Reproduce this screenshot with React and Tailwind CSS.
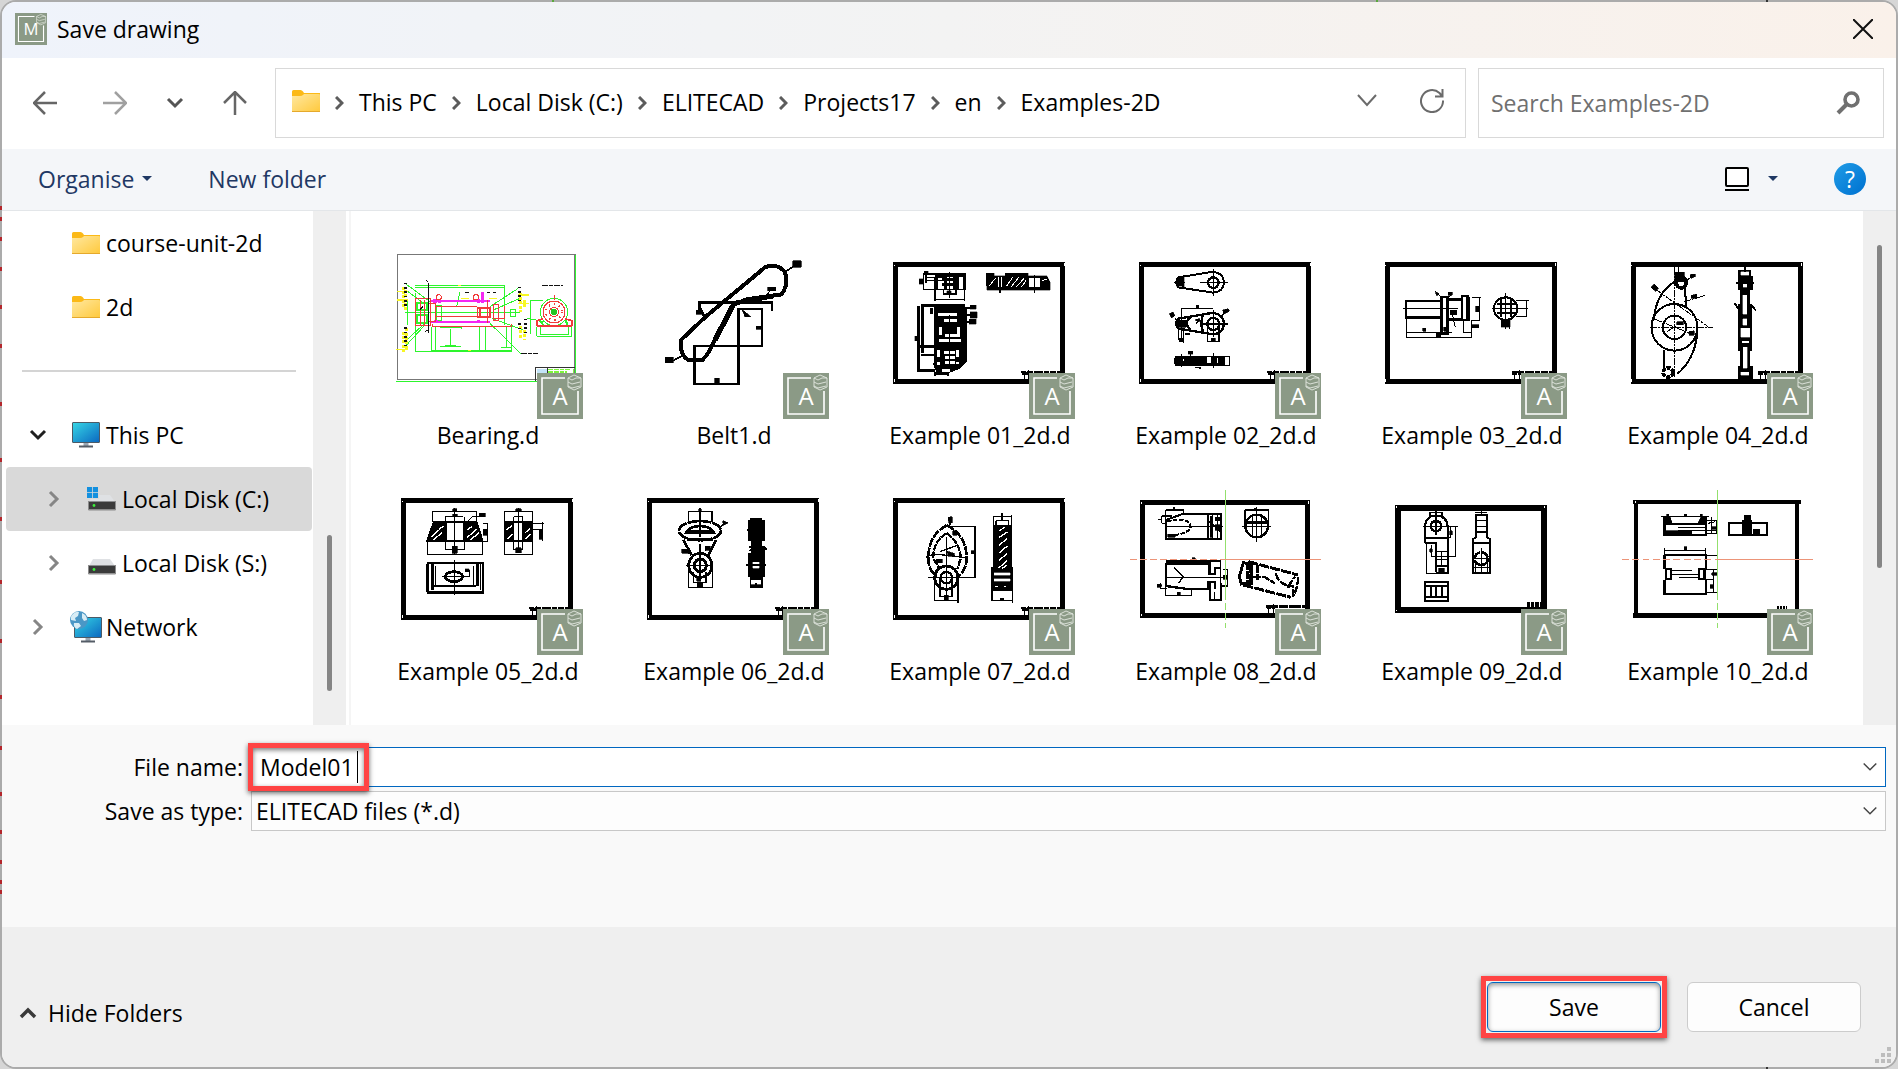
import { useState } from "react";

const crumbs = ["This PC", "Local Disk (C:)", "ELITECAD", "Projects17", "en", "Examples-2D"];

function Chevron({ dir = "right", className = "" }) {
  const paths = {
    right: "M6 3L13 10L6 17",
    down: "M3 6L10 13L17 6",
    up: "M3 14L10 7L17 14",
  };
  return (
    <svg viewBox="0 0 20 20" fill="none" stroke="currentColor" className={className} aria-hidden="true">
      <path d={paths[dir]} />
    </svg>
  );
}

// Green product badge, used in the title bar and on every file
function Badge({ letter, className }) {
  return (
    <svg viewBox="0 0 46 46" className={className} aria-hidden="true">
      <rect width="46" height="46" fill="#8b9a86" />
      <path d="M28 5H5V41H41V18" fill="none" stroke="#fff" strokeWidth="1.6" />
      <path
        d="M37 2L44 5V14L37 17L31 14V5ZM31 5L35 7L39 5L44 5M31 9L35 11L43 9M31 13L35 15L43 13"
        fill="none"
        stroke="#e3e8e1"
        strokeWidth="0.9"
      />
      <text x="23" y="32" textAnchor="middle" fontSize="24" fill="#fff">
        {letter}
      </text>
    </svg>
  );
}

function FolderIcon() {
  return (
    <svg viewBox="0 0 28 22" className="h-[22px] w-7 shrink-0" aria-hidden="true">
      <defs>
        <linearGradient id="folder" x1="0" y1="0" x2="1" y2="1">
          <stop offset="0" stopColor="#ffe8a0" />
          <stop offset="1" stopColor="#ffc93c" />
        </linearGradient>
      </defs>
      <path d="M0 1.5Q0 0 1.5 0H8.5Q10 0 11 1.5L12 3H28V8H0Z" fill="#fbb917" />
      <path d="M0 6H8Q10 6 11 5L12 4H27Q28 4 28 5V20.5Q28 22 27 22H1Q0 22 0 20.5Z" fill="url(#folder)" />
      <path d="M0 21.5H28" stroke="#e5a92c" />
    </svg>
  );
}

function Monitor() {
  return (
    <>
      <defs>
        <linearGradient id="screen" x1="0" y1="0" x2="1" y2="1">
          <stop offset="0" stopColor="#36d7e6" />
          <stop offset="1" stopColor="#0b67c0" />
        </linearGradient>
      </defs>
      <rect x="0.5" y="0.5" width="27" height="20" rx="0.5" fill="url(#screen)" stroke="#4c5a66" />
      <path d="M11.5 21H16.5V24H11.5Z" fill="#9aa6b2" />
      <path d="M7 23.5H21V25.5H7Z" fill="#545c66" />
    </>
  );
}

function PcIcon() {
  return (
    <svg viewBox="0 0 28 26" className="h-[26px] w-7 shrink-0" aria-hidden="true">
      <Monitor />
    </svg>
  );
}

function NetworkIcon() {
  return (
    <svg viewBox="0 0 32 32" className="-mr-0.5 -ml-0.5 h-8 w-8 shrink-0" aria-hidden="true">
      <g transform="translate(4 6)">
        <Monitor />
      </g>
      <circle cx="9" cy="9" r="9" fill="#4a97c6" />
      <path d="M2 4Q5 0 9 1L8 5L5 7L6 10L1 9Q0 6 2 4ZM4 12L9 12L11 15L7 18Q3 16 4 12ZM12 2Q17 4 17 9L14 10L12 7Z" fill="#d7ecf5" />
    </svg>
  );
}

function DriveIcon({ system }) {
  return (
    <svg viewBox="0 0 29 24" className="h-6 w-[29px] shrink-0" aria-hidden="true">
      <path d="M6 8H23L28 15H2Z" fill="#dfe1e4" />
      <rect x="2" y="14.5" width="26" height="8" fill="#3b3b3b" />
      <path d="M1.5 14V23H28.5V14" fill="none" stroke="#8c8c8c" />
      <circle cx="7" cy="18.5" r="1.4" fill="#3cf03c" />
      {system && (
        <>
          <rect width="12" height="12" fill="#d9d9d9" />
          <path d="M0 0H5.2V5.2H0ZM6 0H11V5.2H6ZM0 6H5.2V11H0ZM6 6H11V11H6Z" fill="#1390df" />
        </>
      )}
    </svg>
  );
}

// Black drawing border with the title block scribble at the bottom right
function Sheet({ x = 76, y = 74, w = 502, h = 349, t = 15 }) {
  return (
    <>
      <rect x={x} y={y} width={w} height={h} fill="none" stroke="#000" strokeWidth={t} />
      <path
        d={`M${x - 4} ${y}v5M${x + w + 4} ${y - 4}v8M${x - 4} ${y + h - 5}v8`}
        stroke="#fff"
        strokeWidth="3"
      />
      <path
        d={`M${x + w - 124} ${y + h - 27}h116M${x + w - 122} ${y + h - 22}h26`}
        stroke="#000"
        strokeWidth="8"
        strokeDasharray="14 2 20 3 26 4"
      />
      <path d={`M${x + w - 116} ${y + h - 30}v24M${x + w - 102} ${y + h - 34}v28`} stroke="#000" strokeWidth="3" />
    </>
  );
}

function Bearing() {
  return (
    <>
      <rect x="52" y="44" width="533" height="375" stroke="#777" strokeWidth="4" />
      <g stroke="#2df52d" strokeWidth="3">
        <path d="M49 424H587V44" />
        <path d="M105 160V334H395V262M105 136H373V255M105 142H373M81 176V256M154 262V331M166 262V331M299 262V331M315 262V331M154 331H395M76 216H420M450 181V283M450 181H490M470 288H575V262M470 288V262M482 258V283H564V258" />
        <path d="M180 262H243V267M180 320H243M210 267V320M228 316H195M362 322H395M378 262V320M390 207V230H405V207Z" />
        <path d="M75 130L150 185M78 150L130 190M80 300L140 245M75 320L135 255M330 250L422 341M415 145L330 200M420 175L340 210M430 270L335 235M440 235L495 245M310 185V165M240 155L230 200M170 195H185V240H170Z" />
        <circle cx="522" cy="216" r="41" />
        <path d="M112 190H140V210H112ZM112 226H140V250H112ZM478 240L490 255M556 240L566 262" strokeWidth="6" />
      </g>
      <g stroke="#f426f4" strokeWidth="7">
        <path d="M150 183H330M150 246H330" />
        <path d="M165 178V190M178 178V190M295 178V190M308 155V190M168 240V250M296 240V250" strokeWidth="10" />
      </g>
      <g stroke="#f23a3a" strokeWidth="3">
        <path d="M106 176H150V255H106ZM120 180V255M132 180V255M157 258H395M157 258V252M395 258V252M165 200H292M165 230H292M145 190H166V244H145ZM340 192H355V240H340ZM374 198V234H340M522 165V180" />
        <path d="M292 203H330V230H292ZM300 203V230M322 180V250M470 258V242L490 236M575 258V242L555 236M470 258H575" strokeWidth="5" />
        <circle cx="176" cy="172" r="8" />
        <circle cx="288" cy="172" r="8" />
        <circle cx="522" cy="216" r="33" />
        <circle cx="522" cy="216" r="24" strokeDasharray="4 12" strokeWidth="6" />
        <circle cx="522" cy="216" r="14" />
      </g>
      <circle cx="522" cy="216" r="10" fill="#24c424" stroke="none" />
      <g stroke="#f7f724" strokeWidth="9">
        <path d="M70 140V200M76 150V215M70 275V338M79 265V330M422 158V215M432 180V200M422 258V298M434 270V300" strokeDasharray="9 4" />
        <path d="M50 155H85M50 180H85M48 328H85M415 165H448M415 190H448M243 175H268M328 175H352M235 136H243M265 331H273" strokeWidth="4" />
      </g>
      <g stroke="#111" strokeWidth="3">
        <path d="M76 128V200M76 262V322M418 140V190M418 250V275M436 236V280" strokeWidth="8" strokeDasharray="5 8" />
        <path d="M485 136H550M422 340H474" strokeWidth="4" strokeDasharray="12 2 6 2" />
        <path d="M145 130V165M138 120L145 127M145 165V280M135 275L145 270M256 156H268M320 156H330M340 156H348M120 208L128 200" />
      </g>
      <path d="M466 382H585M466 382V424M502 382V400" stroke="#333" strokeWidth="3" />
      <path d="M470 386H500V398H470Z" fill="#c4e4f8" stroke="none" />
      <path d="M505 388H570M505 396H560M580 388V400" stroke="#7df53b" strokeWidth="4" strokeDasharray="14 3" />
    </>
  );
}

function Belt() {
  return (
    <>
      <path
        d="M903 300Q898 345 925 360H967Q990 340 1010 285L1060 195L1100 178L1205 163Q1228 130 1214 95Q1190 68 1155 82L975 232Z"
        strokeWidth="12"
      />
      <path d="M1005 300L1058 198" strokeWidth="16" />
      <path d="M1060 190L1180 168" strokeWidth="14" />
      <path d="M943 318V432H1076V207H1146V318ZM958 210V187H1176V212M960 205L975 232" strokeWidth="8" />
      <path d="M1220 93L1250 72M905 348L880 362" strokeWidth="5" />
      <path d="M1238 62H1264V82H1238ZM855 352H880V368H855ZM1163 142H1187V152H1163ZM1085 207L1112 230H1095ZM948 210H968V222H948ZM1128 258H1142V268H1128ZM1004 414H1018V428H1004Z" fill="#000" strokeWidth="2" />
      <path d="M1172 150L1160 165" strokeWidth="4" />
    </>
  );
}

function Example01() {
  return (
    <>
      <Sheet />
      <path d="M160 102H285V148H160ZM195 115V182M283 148V182M195 178H283M220 150V162H258V150M238 97V175M168 92V130M150 122H160M170 113H225M170 122H215" strokeWidth="4" />
      <path d="M200 102V148M262 105V148M283 102V150M200 105H285M215 118H262M215 132H262M225 110V150M252 110V150" strokeWidth="9" />
      <path d="M348 100H372V107H405V100H475V107H530L540 125V150H350ZM162 94H174V104H162ZM148 116H158V132H148ZM230 152H244V164H230ZM134 288H146V302H134Z" fill="#000" strokeWidth="1" />
      <path d="M478 115H508V140H478ZM384 112V140M395 112V140" fill="#fff" stroke="#fff" strokeWidth="3" />
      <path d="M358 138L376 115M410 138L428 112M424 140L446 112M440 140L462 115M455 140L468 122M515 122L530 118" stroke="#fff" strokeWidth="3" />
      <path d="M390 140V158M493 105V158" strokeWidth="4" />
      <path d="M145 197V391H195M152 197H196M158 200V340M145 320H195M152 345H195M185 205V222" strokeWidth="8" />
      <path d="M195 192H283V208H290V365L268 385L240 396H200L192 375Z" fill="#000" strokeWidth="3" />
      <path d="M205 222H262M222 242H262M212 262V285M225 285H262M265 262V290M208 300H272M205 330V350M262 330V350M222 338H255M225 352H255M205 365V375M225 367H255M262 365V372M215 392H240" stroke="#fff" strokeWidth="9" />
      <path d="M238 225V380" strokeWidth="5" />
      <path d="M195 396V408M234 396V408M195 402H234M283 203H300M288 225H305M288 245H300" strokeWidth="6" />
      <path d="M300 196H318V208H300ZM300 215H322V234H300ZM298 238H318V252H298Z" fill="#000" strokeWidth="1" />
    </>
  );
}

function Example02() {
  return (
    <>
      <Sheet x={814} />
      <path d="M925 112L1030 95Q1062 100 1062 128Q1060 155 1030 158L925 142Q912 127 925 112Z" strokeWidth="6" />
      <circle cx="1030" cy="128" r="16" strokeWidth="7" />
      <path d="M1030 88V168M990 128H1074M912 128H945" strokeWidth="3" />
      <path d="M918 117L942 112V140L918 138Z" fill="#000" />
      <path d="M925 236L1030 218Q1062 225 1062 252Q1060 280 1030 283L925 266Q912 250 925 236ZM960 232Q940 250 962 270M1000 222Q988 250 1000 278" strokeWidth="7" />
      <circle cx="1030" cy="252" r="18" strokeWidth="7" />
      <path d="M935 205H1030M935 205V305M925 265V300M940 265V310M1013 250V305H1047V250M990 252H1074M1030 210V290M915 236L930 250M1055 228L1068 212M978 250L990 238M945 282H960" strokeWidth="4" />
      <path d="M898 222L908 216L915 226L905 234ZM1058 210L1075 206L1078 214L1062 222ZM918 240H948V262H918ZM928 295H940V305H928ZM1023 294H1036V304H1023ZM975 240L988 235V245ZM978 196H986V205H978Z" fill="#000" strokeWidth="2" />
      <path d="M918 350H1078V376H918Q910 363 918 350Z" fill="#000" strokeWidth="4" />
      <path d="M940 357V362M1012 354H1022V368H1012ZM1042 354V370M1066 353H1075V372H1066Z" fill="#fff" stroke="#fff" strokeWidth="4" />
      <path d="M1030 340V384M935 342V380M962 336V348M975 382H990V388" strokeWidth="4" />
      <path d="M955 334H968V342H955Z" fill="#000" />
    </>
  );
}

function Example03() {
  return (
    <>
      <Sheet x={80} w={487} />
      <path d="M134 182H238V232H134ZM238 170H256V280H238ZM298 168H314V240H298ZM256 178H298M256 238H298M318 172V242" strokeWidth="7" />
      <path d="M126 205H285M137 232V292H325V240M326 172H354M350 172V242H326M302 240V276H325M137 276H270M325 258H345M225 160L238 172M265 165L256 176M270 225L278 260" strokeWidth="3" />
      <path d="M264 210H282V224H264ZM338 198H348V215H338ZM328 254H346V263H328ZM222 276H236V290H222ZM184 264H192V274H184ZM220 154L232 162L224 168ZM258 157H270V165H258ZM244 262H254V274H244Z" fill="#000" strokeWidth="2" />
      <circle cx="425" cy="206" r="34" strokeWidth="6" />
      <path d="M412 178V232M440 178V232M400 192H452M400 218H452" strokeWidth="6" />
      <path d="M425 160V268M384 206H490M456 182H492M486 182V230H456M436 238V268" strokeWidth="3" />
      <path d="M412 240H438V262H412Z" fill="#000" />
    </>
  );
}

function Example04() {
  return (
    <>
      <Sheet x={797} w={487} />
      <ellipse cx="917" cy="262" rx="67" ry="70" strokeWidth="6" />
      <ellipse cx="917" cy="262" rx="34" ry="35" strokeWidth="6" />
      <path d="M935 115Q862 150 857 240M948 145L951 205M984 280Q975 360 925 402M886 330V385" strokeWidth="6" />
      <path d="M917 82V415M845 262H1030M865 150L1015 260M860 238L975 285M895 275L940 245M950 122L975 106M945 185L1005 167M930 82V100" strokeWidth="3" strokeDasharray="22 3 6 3" />
      <ellipse cx="937" cy="128" rx="14" ry="16" strokeWidth="11" />
      <circle cx="898" cy="397" r="14" strokeWidth="11" strokeDasharray="12 3" />
      <path d="M848 142L858 132L870 145L862 154ZM962 104L978 102V110L965 115ZM966 166L982 162V174H966ZM958 275L975 272V285H960ZM918 96H946V125H918ZM924 245H942V254H924Z" fill="#000" strokeWidth="2" />
      <path d="M1106 92H1138V110H1106ZM1104 112H1142V148H1104ZM1112 148V195H1106V330H1112V382H1104V415H1142V382H1134V330H1140V195H1134V148Z" fill="#000" strokeWidth="6" />
      <path d="M1110 95H1134V105H1110ZM1118 128H1128V142H1118ZM1116 165H1128V222H1116ZM1116 236H1128V256H1116ZM1110 265H1136V292H1110ZM1114 303H1134V308H1114ZM1118 322H1130V385H1118ZM1110 396H1134V406H1110Z" fill="#fff" stroke="#fff" strokeWidth="1" />
      <path d="M1122 82V95M1092 190L1108 212M1155 212L1140 195M1096 130H1148" strokeWidth="6" />
    </>
  );
}

function Example05() {
  return (
    <>
      <Sheet x={70} y={62} />
      <path d="M162 125H200V184H140Q150 150 162 125ZM250 125H290Q300 150 308 184H250ZM374 125H400V184H374ZM430 125H456V184H430Z" fill="#000" strokeWidth="4" />
      <path d="M200 125H250M200 184H250M400 125H430M400 184H430" strokeWidth="6" />
      <path d="M158 94H290M158 94V125M290 94V125M195 110H250M195 110V208H252V110M142 184V222H308V184M224 84V222M308 130H322V184H308M262 125L280 108H300M374 94H456M374 94V222H458V94M402 110H426V208H400V110M414 84V215M456 130H492M488 125V182M456 148H488" strokeWidth="3" />
      <path d="M152 172L176 150M160 180L186 158M178 148L190 138M262 172L290 148M270 180L298 158M262 150L275 140M380 150L396 136M382 176L398 162M436 158L450 145M434 178L452 162" stroke="#fff" strokeWidth="4" />
      <path d="M218 86H230V93H218ZM218 102H232V110H218ZM217 198H231V220H217ZM298 100H316V110H298ZM310 148H320V166H310ZM407 86H423V93H407ZM407 203H424V218H407ZM477 148H486V178H477Z" fill="#000" strokeWidth="2" />
      <path d="M143 248H308V337H143Z" strokeWidth="7" />
      <path d="M157 252V330M162 318H288M292 252V318" strokeWidth="7" />
      <path d="M138 252V335M165 258V314M280 258V314M302 252V330M224 240V344M186 290H268V270" strokeWidth="3" />
      <ellipse cx="222" cy="290" rx="26" ry="15" strokeWidth="8" />
      <path d="M256 266H268V275H256Z" fill="#000" />
    </>
  );
}

function Example06() {
  return (
    <>
      <Sheet x={808} y={62} />
      <ellipse cx="960" cy="152" rx="63" ry="29" strokeWidth="8" strokeDasharray="34 3" />
      <path d="M918 158Q930 138 960 138Q990 138 1002 158ZM910 180L935 225M1008 180L985 225M920 178H1000" strokeWidth="8" />
      <ellipse cx="961" cy="256" rx="35" ry="36" strokeWidth="8" />
      <ellipse cx="961" cy="256" rx="18" ry="19" strokeWidth="9" />
      <path d="M926 94H996M926 94V125M996 94V125M960 84V170M960 192V300M918 256H1000M926 256V323H997V256M940 275V308H978V275M905 212L930 220M1022 140L1038 128M975 212L990 200" strokeWidth="4" />
      <path d="M956 86H964V93H956ZM1028 122L1045 128L1030 136ZM905 208H928V220H905ZM975 198H990V210H975ZM952 306H968V320H952ZM950 295H962V303H950ZM930 150H990V160H930Z" fill="#000" strokeWidth="2" />
      <path d="M1112 115H1144V122H1153V182H1144V212H1152V290H1146V323H1112V290H1105V222H1114V182H1105V122H1112Z" fill="#000" strokeWidth="4" />
      <path d="M1118 246H1138V251H1118ZM1118 259H1138V264H1118ZM1114 300H1142V312H1114Z" fill="#fff" stroke="#fff" strokeWidth="1" />
      <path d="M1100 150H1110M1108 200L1160 208M1108 212L1156 200M1098 254H1158M1128 310V322" strokeWidth="6" />
    </>
  );
}

function Example07() {
  return (
    <>
      <Sheet x={76} y={62} />
      <path d="M230 136Q175 165 175 235Q175 270 200 290M230 136Q290 165 290 235Q290 270 262 292" strokeWidth="8" strokeDasharray="26 3" />
      <path d="M230 160Q188 185 190 235L208 265M230 160Q272 190 272 235L262 268" strokeWidth="7" strokeDasharray="20 3" />
      <circle cx="229" cy="293" r="35" strokeWidth="8" />
      <circle cx="229" cy="293" r="17" strokeWidth="7" />
      <path d="M229 172V355M168 232L190 222L250 228L295 234M175 293H315M194 300V362M264 300V368M194 362H264M210 295V350H246V295M240 139H315V293M240 136V112M210 215L265 195M210 240L195 250" strokeWidth="4" />
      <path d="M234 112L246 110V128H236ZM304 212H313V221H304ZM198 238H216V248H198ZM222 345H234V360H222ZM248 152H262V166H248ZM232 214L252 220V228H234Z" fill="#000" strokeWidth="2" />
      <path d="M370 136H424V262H428V330H366V262H370Z" fill="#000" strokeWidth="4" />
      <path d="M388 152L404 142M388 172L412 156M386 196L412 176M386 220L412 198M386 242L412 220M386 264L412 242M396 266L410 256M375 320H385M402 320H408" stroke="#fff" strokeWidth="4" />
      <path d="M372 278H420V286H372ZM372 296H420V304H372Z" fill="#fff" stroke="#fff" strokeWidth="1" />
      <path d="M370 110H424M370 110V136M424 105V136M396 100V120M378 122H416V136M378 122V136M366 330V362H428V330M428 362V368" strokeWidth="4" />
      <path d="M391 354H401V362H391Z" fill="#000" />
    </>
  );
}

function Axes({ x, left, right }) {
  return (
    <>
      <path d={`M${x} 30V340`} stroke="#93e06c" strokeWidth="3" />
      <path d={`M${x} 340V444`} stroke="#93e06c" strokeWidth="3" strokeDasharray="20 10" />
      <path d={`M${x} 239H${right}`} stroke="#ec9478" strokeWidth="3" />
      <path d={`M${left} 239H${x}`} stroke="#ec9478" strokeWidth="3" strokeDasharray="20 10" />
    </>
  );
}

function Example08() {
  return (
    <>
      <Sheet x={818} y={67} w={494} h={339} />
      <path d="M887 120L935 103H1054V176H887ZM1015 103V176" strokeWidth="6" />
      <path d="M890 124Q960 110 962 140Q960 160 900 168" strokeWidth="6" strokeDasharray="14 4" />
      <path d="M887 90V175M887 90H940V103M875 108V130M875 108H905M875 130H890M890 140H1060M912 80V92M865 118H875M1028 105V175M1042 105V175M1018 125L1052 155" strokeWidth="4" />
      <path d="M1020 108H1028V172H1020ZM1036 112H1050V122H1036ZM1036 134H1050V150H1036ZM893 162H915V172H893Z" fill="#000" strokeWidth="2" />
      <circle cx="1160" cy="138" r="34" strokeWidth="7" />
      <path d="M1125 90H1196V130M1125 90V130M1160 80V186M1115 140H1202M1148 108V168M1174 108V168" strokeWidth="4" />
      <path d="M1130 127H1190M1156 84V92" strokeWidth="9" />
      <path d="M887 250H1018V282H1034V264H1054M887 250V318L945 326H1015V306H1034V328M1020 310V360H1052V310" strokeWidth="7" />
      <path d="M887 243H1052M1052 243V362M887 320V347H964V328M872 310V325H890M890 293H1072V268M1058 268H1074M1072 293V318H1055M912 262L940 290L925 310M970 236V245M864 317H875M1034 335V360" strokeWidth="4" />
      <path d="M1060 286H1070V298H1060ZM966 233H975V242H966ZM922 336H930V346H922ZM862 312H874V322H862Z" fill="#000" strokeWidth="2" />
      <path d="M1135 245L1284 285M1120 315L1262 352M1140 312V250" strokeWidth="9" strokeDasharray="30 4" />
      <path d="M1120 248L1144 254V310L1114 312L1108 290Z" strokeWidth="9" />
      <path d="M1132 246V318M1162 255V300M1284 290Q1284 325 1268 350M1250 320L1268 318V350M1218 280Q1220 305 1255 318L1275 290M1150 290H1182L1215 310" strokeWidth="7" strokeDasharray="24 3" />
      <Axes x={1067} left={780} right={1353} />
    </>
  );
}

function Example09() {
  return (
    <>
      <rect x="111" y="84" width="425" height="305" strokeWidth="17" />
      <path d="M108 79V84M539 79V84M108 389V394" stroke="#fff" strokeWidth="3" />
      <path d="M486 374H530" strokeWidth="14" strokeDasharray="10 3" />
      <path d="M190 190V140Q192 108 222 106Q254 108 256 140V275M190 188H222V275M190 174H256M222 258H256V278H222" strokeWidth="6" />
      <ellipse cx="222" cy="138" rx="15" ry="16" strokeWidth="8" />
      <path d="M205 97H240V110M205 97V112M222 90V165M185 140H285M194 190V280H256M278 140V230H208V195M222 215H256M222 238H256M264 140V172H258M238 215V260" strokeWidth="4" />
      <path d="M204 206H211V216H204ZM262 152H269V164H262ZM230 264H246V275H230ZM216 120H228V128H216Z" fill="#000" strokeWidth="2" />
      <path d="M338 106H372V172L380 178V280H329V178L338 172ZM329 190H380" strokeWidth="6" />
      <circle cx="354" cy="236" r="19" strokeWidth="8" strokeDasharray="26 3" />
      <path d="M336 97H370M340 122H372M336 140H374M342 156H372M355 90V106M355 204V278M333 236H378M338 250V278M372 250V278M333 262H376" strokeWidth="4" />
      <path d="M191 305H257V362H191Z" strokeWidth="6" />
      <path d="M191 318H257M191 350H257" strokeWidth="7" />
      <path d="M207 318V350M222 318V350M240 318V350" strokeWidth="4" />
    </>
  );
}

function Example10() {
  return (
    <>
      <path d="M796 66H1285M796 406H1285" strokeWidth="14" />
      <path d="M806 66V406M1274 66V406" strokeWidth="12" />
      <path d="M804 63V68" stroke="#fff" strokeWidth="3" />
      <path d="M1216 383H1244" strokeWidth="9" strokeDasharray="5 4" />
      <path d="M888 110V164H1008V110M888 132H1008" strokeWidth="6" />
      <path d="M888 108H904L910 130H888ZM1008 108H996L986 130H1008ZM888 152H968V162H888Z" fill="#000" strokeWidth="2" />
      <path d="M878 108H1018M926 142H1008M926 150H1040M1008 122H1040V160H1008M1026 110V160M1015 130L1036 125" strokeWidth="3" />
      <path d="M945 102H953V110H945ZM1026 140H1040V148H1026ZM894 102H900V110H894ZM992 102H998V110H992Z" fill="#000" strokeWidth="2" />
      <path d="M1075 130H1187V164H1075Z" strokeWidth="6" />
      <path d="M1116 122H1142V160H1116ZM1122 106H1138V124H1122ZM1148 148H1165V160H1148Z" fill="#000" strokeWidth="4" />
      <path d="M888 224H1008V266M888 224V266M888 300V342H1008V300" strokeWidth="6" />
      <path d="M893 266H908V298H893ZM988 266H1004V298H988Z" strokeWidth="6" />
      <path d="M888 210H1008M888 205V224M1008 205V224M1008 226H1040M908 272H968M930 293H988M908 284H988M1008 268H1040M1008 298H1030V338M1008 338H1042M1008 266V300M1030 268V298" strokeWidth="3" />
      <path d="M945 200H953V210H945ZM1026 278H1040V286H1026ZM1022 314H1032V324H1022Z" fill="#000" strokeWidth="2" />
      <Axes x={1042} left={764} right={1320} />
    </>
  );
}

const files = [
  { name: "Bearing.d", view: "36 -39 576 576", Drawing: Bearing },
  { name: "Belt1.d", view: "774 -39 576 576", Drawing: Belt },
  { name: "Example 01_2d.d", view: "42 -39 576 576", Drawing: Example01 },
  { name: "Example 02_2d.d", view: "780 -39 576 576", Drawing: Example02 },
  { name: "Example 03_2d.d", view: "47 -39 560 576", Drawing: Example03 },
  { name: "Example 04_2d.d", view: "764 -39 560 576", Drawing: Example04 },
  { name: "Example 05_2d.d", view: "36 -51 576 576", Drawing: Example05 },
  { name: "Example 06_2d.d", view: "774 -51 576 576", Drawing: Example06 },
  { name: "Example 07_2d.d", view: "42 -51 576 576", Drawing: Example07 },
  { name: "Example 08_2d.d", view: "780 -51 576 576", Drawing: Example08 },
  { name: "Example 09_2d.d", view: "47 -51 560 576", Drawing: Example09 },
  { name: "Example 10_2d.d", view: "764 -51 560 576", Drawing: Example10 },
];

function FileItem({ name, view, Drawing }) {
  return (
    <button className="flex h-[236px] w-[246px] flex-col items-center">
      <span className="relative block h-48 w-48">
        <svg
          viewBox={view}
          preserveAspectRatio="none"
          fill="none"
          stroke="#000"
          shapeRendering="crispEdges"
          className="h-48 w-48"
          aria-hidden="true"
        >
          <Drawing />
        </svg>
        <Badge letter="A" className="absolute right-px bottom-0 h-[46px] w-[46px]" />
      </span>
      <span className="leading-8">{name}</span>
    </button>
  );
}

function TreeItem({ label, icon, arrow, nested, selected }) {
  return (
    <button
      className={`flex h-16 w-full items-center rounded-sm ${nested ? "pl-[38px]" : "pl-[22px]"} ${
        selected ? "bg-[#d9d9d9]" : ""
      }`}
    >
      <span className={nested ? "flex w-[43px]" : "flex w-11"}>
        {arrow === "down" && <Chevron dir="down" className="h-5 w-5 stroke-[3] text-[#1f1f1f]" />}
        {arrow === "right" && <Chevron className="h-5 w-5 stroke-[3] text-[#868686]" />}
      </span>
      {icon}
      <span className="ml-1.5 whitespace-nowrap">{label}</span>
    </button>
  );
}

export default function App() {
  const [fileName, setFileName] = useState("Model01");
  const [search, setSearch] = useState("");

  return (
    <div className="relative min-h-screen bg-[#d6d6d6] font-['Open_Sans','Noto_Sans',sans-serif] text-[23px] leading-8 text-black">
      <div className="flex min-h-screen flex-col overflow-hidden rounded-2xl border-2 border-[#ababab] bg-white">
        {/* Title bar */}
        <header className="flex h-14 shrink-0 items-center bg-linear-to-r from-[#eff3fb] via-[#f3f3f3] to-[#faf1ea] pr-[11px] pb-0.5 pl-[13px]">
          <Badge letter="M" className="h-8 w-8" />
          <h1 className="ml-2.5">Save drawing</h1>
          <button aria-label="Close" className="ml-auto flex h-10 w-11 items-center justify-center">
            <svg viewBox="0 0 20 20" className="h-5 w-5" fill="none" stroke="#111" strokeWidth="2">
              <path d="M0 0L20 20M20 0L0 20" />
            </svg>
          </button>
        </header>

        {/* Navigation */}
        <nav className="flex h-[91px] shrink-0 items-center pr-3 pb-px pl-[23px]">
          <button aria-label="Back" className="mr-[30px] flex w-10 justify-center text-[#666]">
            <svg viewBox="0 0 24 24" className="h-6 w-6" fill="none" stroke="currentColor" strokeWidth="2.5">
              <path d="M24 12H1M12 1L1 12L12 23" />
            </svg>
          </button>
          <button aria-label="Forward" className="mr-5 flex w-10 justify-center text-[#a0a0a0]">
            <svg viewBox="0 0 24 24" className="h-6 w-6" fill="none" stroke="currentColor" strokeWidth="2.5">
              <path d="M0 12H23M12 1L23 12L12 23" />
            </svg>
          </button>
          <button aria-label="Recent locations" className="mr-5 flex w-10 justify-center text-[#555]">
            <Chevron dir="down" className="h-5 w-5 stroke-[3]" />
          </button>
          <button aria-label="Up" className="mr-5 flex w-10 justify-center text-[#666]">
            <svg viewBox="0 0 24 24" className="h-6 w-6" fill="none" stroke="currentColor" strokeWidth="2.5">
              <path d="M12 24V1M1 12L12 1L23 12" />
            </svg>
          </button>
          <div className="flex h-[70px] flex-1 items-center gap-[15px] border border-[#d9d9d9] pr-[11px] pb-1 pl-4">
            <FolderIcon />
            {crumbs.map((crumb) => (
              <div key={crumb} className="flex items-center gap-[15px] whitespace-nowrap">
                <svg viewBox="0 0 9 14" className="mt-1 h-3.5 w-[9px]" fill="none" stroke="#5c5c5c" strokeWidth="3">
                  <path d="M1 1L7 7L1 13" />
                </svg>
                <button className="pt-0.5">{crumb}</button>
              </div>
            ))}
            <button aria-label="Previous locations" className="mr-2.5 ml-auto flex w-10 justify-center text-[#6b6b6b]">
              <svg viewBox="0 0 20 20" className="h-5 w-5" fill="none" stroke="currentColor" strokeWidth="2">
                <path d="M1 4L10 14L19 4" />
              </svg>
            </button>
            <button aria-label="Refresh" className="flex w-[42px] justify-end pr-2.5 text-[#6b6b6b]">
              <svg viewBox="0 0 24 24" className="h-6 w-6" fill="none" stroke="currentColor" strokeWidth="2">
                <path d="M23 11.5A11 11 0 1 1 19.5 4L22 7M22.5 0V7.5H15" />
              </svg>
            </button>
          </div>
          <div className="ml-3 flex h-[70px] w-[406px] items-center border border-[#d9d9d9] pr-[23px] pl-3">
            <input
              type="text"
              aria-label="Search Examples-2D"
              placeholder="Search Examples-2D"
              value={search}
              onChange={(e) => setSearch(e.target.value)}
              className="min-w-0 flex-1 outline-none placeholder:text-[#707070]"
            />
            <svg viewBox="0 0 24 24" className="h-6 w-6" fill="none" stroke="#707070" aria-hidden="true">
              <circle cx="15.5" cy="8.5" r="6.5" strokeWidth="3.6" />
              <path d="M11 13L2 22" strokeWidth="4" />
            </svg>
          </div>
        </nav>

        {/* Toolbar */}
        <div className="flex h-[62px] shrink-0 items-center border-b border-[#e3e6e9] bg-[#f4f6f9] pr-[30px] pb-0.5 pl-9 text-[#1f3864]">
          <button className="flex items-center gap-2">
            Organise
            <span className="border-x-[5px] border-t-[5px] border-x-transparent border-t-[#1f3864]" />
          </button>
          <button className="ml-14">New folder</button>
          <button aria-label="Change your view" className="ml-auto flex items-center gap-[19px]">
            <svg viewBox="0 0 24 24" className="h-6 w-6" fill="none" stroke="#000" strokeWidth="2">
              <rect x="1" y="1" width="22" height="18" rx="1" fill="#fff" />
              <path d="M0 23H24" />
            </svg>
            <span className="border-x-[5px] border-t-[5px] border-x-transparent border-t-[#1f3864]" />
          </button>
          <button
            aria-label="Help"
            className="ml-14 flex h-8 w-8 items-center justify-center rounded-full bg-linear-to-br from-[#1f9ce6] to-[#0070d0] text-white"
          >
            ?
          </button>
        </div>

        <main className="flex min-h-[514px] flex-1">
          <aside className="flex w-[344px] shrink-0">
            <div className="w-[311px] pr-px pl-1">
              <TreeItem label="course-unit-2d" icon={<FolderIcon />} />
              <TreeItem label="2d" icon={<FolderIcon />} />
              <div className="flex h-16 items-center">
                <hr className="mr-4 ml-4 flex-1 border-t-2 border-[#d4d4d4]" />
              </div>
              <TreeItem label="This PC" icon={<PcIcon />} arrow="down" />
              <TreeItem label="Local Disk (C:)" icon={<DriveIcon system />} arrow="right" nested selected />
              <TreeItem label="Local Disk (S:)" icon={<DriveIcon />} arrow="right" nested />
              <TreeItem label="Network" icon={<NetworkIcon />} arrow="right" />
            </div>
            <div className="flex w-[33px] flex-col items-center justify-end bg-[#efefef] pb-[34px]">
              <div className="h-[156px] w-[5px] rounded-full bg-[#858585]" />
            </div>
          </aside>
          <section className="ml-[3px] flex-1 border-l-2 border-[#f5f5f5] pt-4 pl-3.5">
            <div className="flex flex-wrap">
              {files.map((file) => (
                <FileItem key={file.name} {...file} />
              ))}
            </div>
          </section>
          <div className="flex w-[33px] flex-col items-center bg-[#efefef] pt-[34px]">
            <div className="h-[323px] w-[5px] rounded-full bg-[#858585]" />
          </div>
        </main>

        {/* File name and type */}
        <form className="flex h-[202px] shrink-0 flex-col gap-1 bg-[#f9f9f9] pt-[22px] pr-2.5">
          <div className="flex h-10 items-center">
            <label htmlFor="name" className="w-[241px] text-right">
              File name:
            </label>
            <div className="relative ml-2 flex h-10 flex-1 items-center border border-[#0067c0] bg-white">
              <input
                id="name"
                type="text"
                value={fileName}
                onChange={(e) => setFileName(e.target.value)}
                className="min-w-0 flex-1 pl-2 outline-none"
              />
              <Chevron dir="down" className="mr-1.5 h-[18px] w-[18px] stroke-[1.6] text-[#444]" />
              <span className="pointer-events-none absolute -top-[5px] -left-1 flex h-12 w-[121px] items-center justify-end border-[5px] border-[#ff4444] pr-1.5 shadow-[0_2px_5px_#0009,inset_0_2px_5px_#0008]">
                <span className="h-8 w-px bg-black" />
              </span>
            </div>
          </div>
          <div className="flex h-10 items-center">
            <label htmlFor="type" className="w-[241px] text-right">
              Save as type:
            </label>
            <div className="ml-2 flex h-10 flex-1 items-center border border-[#c8c8c8] bg-[#fdfdfd]">
              <select id="type" className="min-w-0 flex-1 appearance-none pl-1 outline-none">
                <option>ELITECAD files (*.d)</option>
              </select>
              <Chevron dir="down" className="pointer-events-none mr-1.5 h-[18px] w-[18px] stroke-[1.6] text-[#444]" />
            </div>
          </div>
        </form>

        <footer className="relative flex h-[140px] shrink-0 items-center bg-[#efefef] pr-[35px] pl-4">
          <button className="mt-8 flex items-center gap-2.5">
            <Chevron dir="up" className="h-5 w-5 stroke-[3.5] text-[#3a3a3a]" />
            Hide Folders
          </button>
          <div className="mt-5 ml-auto flex items-center gap-5">
            <span className="border-[5px] border-[#ff4444] shadow-[0_2px_5px_#0009]">
              <button className="m-px block h-[50px] w-[174px] rounded-md border border-[#0067c0] bg-[#fdfdfd] shadow-[inset_0_2px_5px_#0006]">
                Save
              </button>
            </span>
            <button className="h-[50px] w-[174px] rounded-md border border-[#ccc] bg-[#fdfdfd]">Cancel</button>
          </div>
          <svg viewBox="0 0 16 16" className="absolute right-[5px] bottom-1 h-4 w-4" fill="#bdbdbd" aria-hidden="true">
            <path d="M12 0H16V4H12ZM6 6H10V10H6ZM12 6H16V10H12ZM0 12H4V16H0ZM6 12H10V16H6ZM12 12H16V16H12Z" />
          </svg>
        </footer>
      </div>

      {/* Bits of the drawing behind the dialog that show along its edge */}
      <svg className="pointer-events-none absolute inset-0 h-full w-full" fill="none" aria-hidden="true">
        <path
          d="M0 208h2M0 219h2M0 239h2M0 269h2M0 307h2M0 346h2M0 404h2M0 460h2M0 519h2M0 582h2M0 641h2M0 697h2M0 748h2M0 794h2M0 832h2M0 862h2M0 882h2M0 892h2"
          stroke="#b3262b"
          strokeWidth="4"
        />
        <path d="M553 0v2M1377 0v2" stroke="#5aa83c" strokeWidth="2" />
        <path d="M1767 0v2M1767 1067v2" stroke="#333" strokeWidth="2" />
      </svg>
    </div>
  );
}
